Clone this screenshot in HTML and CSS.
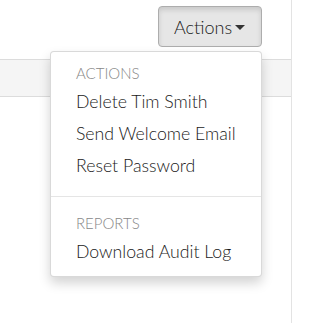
FILE: index.html
```html
<!DOCTYPE html>
<html>
<head>
<meta charset="utf-8">
<link rel="stylesheet" href="styles.css">
</head>
<body>
<div class="page">
  <div class="toolbar">
    <div class="dropdown">
      <button class="btn">Actions<span class="caret"></span></button>
      <div class="menu">
        <div class="menu-header">Actions</div>
        <div class="item">Delete Tim Smith</div>
        <div class="item">Send Welcome Email</div>
        <div class="item">Reset Password</div>
        <div class="divider"></div>
        <div class="menu-header">Reports</div>
        <div class="item">Download Audit Log</div>
      </div>
    </div>
  </div>
  <div class="band"></div>
</div>
</body>
</html>
```

FILE: styles.css
```css
html, body {
  margin: 0;
  padding: 0;
  background: #fff;
  font-family: Lato, "Open Sans", sans-serif;
  font-weight: 300;
}
.page {
  width: 292px;
  height: 323px;
  border-right: 1px solid #e3e3e3;
  box-sizing: border-box;
}
.toolbar {
  display: flex;
  justify-content: flex-end;
  padding: 6px 29px 0 0;
}
.dropdown {
  position: relative;
}
.btn {
  display: flex;
  align-items: center;
  box-sizing: border-box;
  width: 104px;
  height: 41px;
  padding: 0 0 0 15px;
  font-family: Lato, "Open Sans", sans-serif;
  font-weight: 300;
  font-size: 18px;
  color: #1a1a1a;
  background: #e6e6e6;
  border: 1px solid #adadad;
  border-radius: 4px;
  box-shadow: inset 0 3px 5px rgba(0,0,0,0.125);
}
.caret {
  display: inline-block;
  width: 0;
  height: 0;
  margin-left: 3px;
  margin-top: 1px;
  border-top: 5px solid #333;
  border-left: 5px solid transparent;
  border-right: 5px solid transparent;
}
.band {
  margin-top: 12px;
  height: 36px;
  background: #f5f5f5;
  border-top: 1px solid #dcdcdc;
  border-bottom: 1px solid #dcdcdc;
}
.menu {
  position: absolute;
  top: 45px;
  right: 0;
  width: 212px;
  box-sizing: border-box;
  padding: 11px 0 8px;
  background: #fff;
  border: 1px solid rgba(0,0,0,0.15);
  border-radius: 4px;
  box-shadow: 0 6px 12px rgba(0,0,0,0.175);
  z-index: 10;
}
.menu-header {
  padding: 0 25px;
  font-size: 15px;
  line-height: 20px;
  color: #888;
  text-transform: uppercase;
  margin-bottom: 3px;
}
.item {
  padding: 0 25px;
  font-size: 17.7px;
  line-height: 32px;
  color: #1a1a1a;
  white-space: nowrap;
}
.divider {
  height: 1px;
  background: #e5e5e5;
  margin: 14px 0 16px;
}
```
